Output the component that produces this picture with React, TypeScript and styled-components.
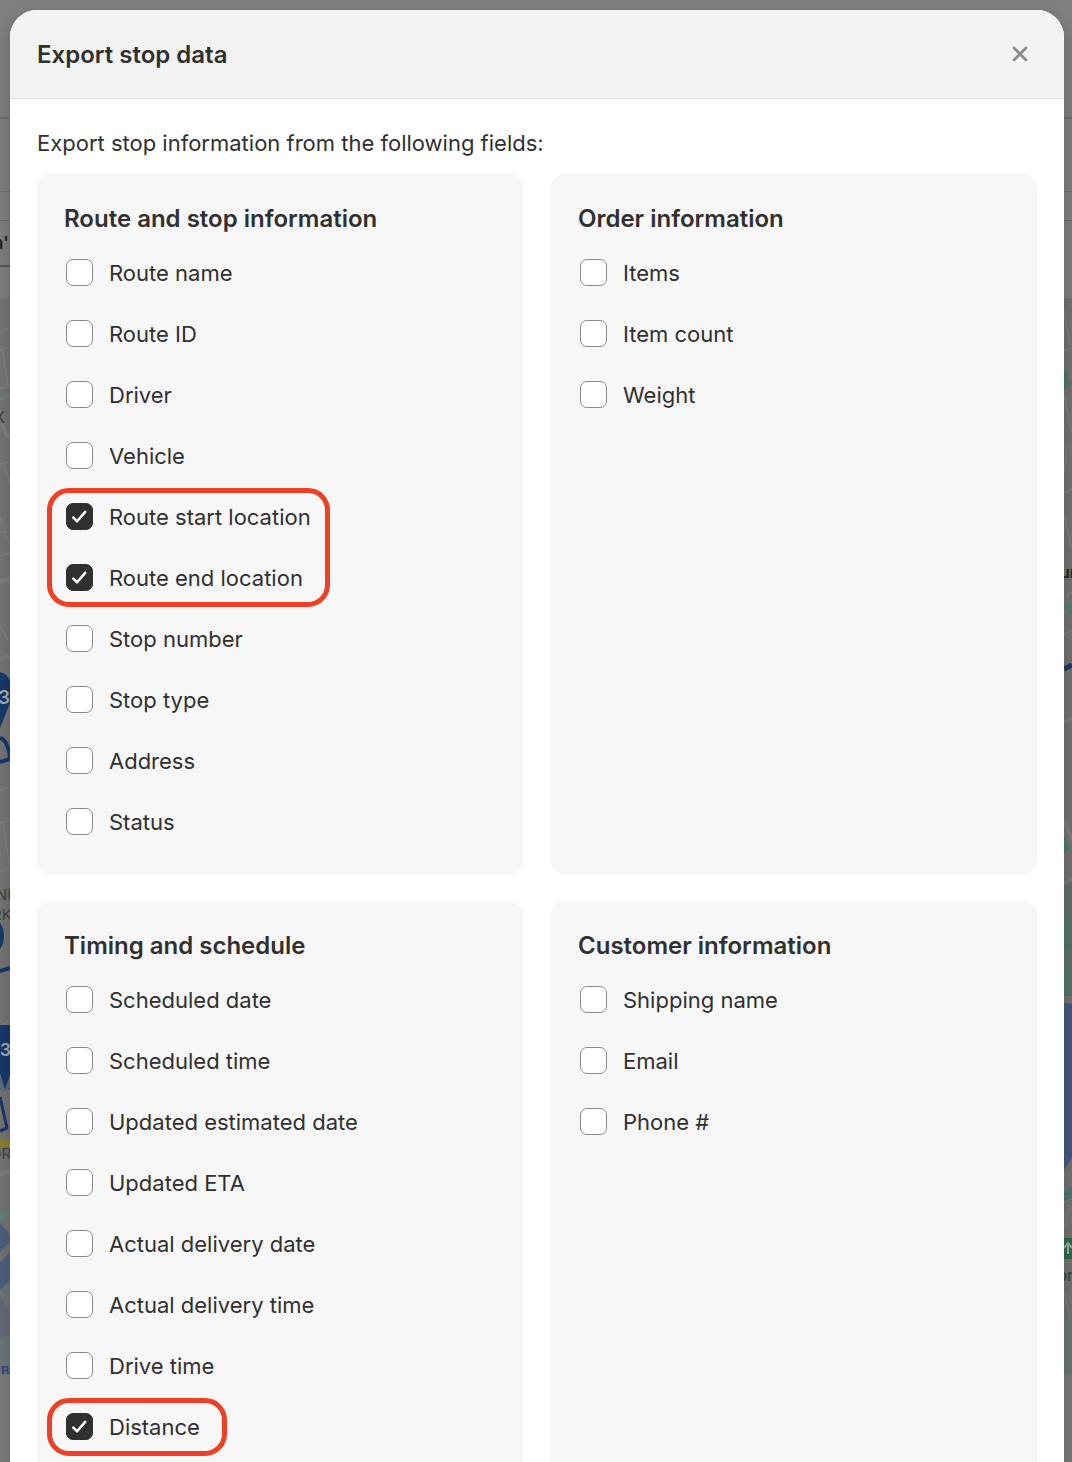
import React, { useState } from "react";
import styled, { createGlobalStyle } from "styled-components";

const GlobalStyle = createGlobalStyle`
  *, *::before, *::after { box-sizing: border-box; }
  body {
    margin: 0;
    background: #7f7f7f;
    color: #303030;
    font-family: Inter, "Liberation Sans", sans-serif;
    font-size: 22px;
    font-weight: 400;
    line-height: 32px;
    font-optical-sizing: none;
    -webkit-font-smoothing: antialiased;
  }
`;

const Screen = styled.div`
  position: relative;
  height: 100vh;
  overflow: hidden;
`;

const Backdrop = styled.div`
  position: absolute;
  inset: 0;
  display: flex;
  justify-content: space-between;
  background: #7f7f7f;
`;

const MapStrip = styled.svg`
  display: block;
  flex: none;
  overflow: hidden;
`;

const Scroller = styled.div`
  position: relative;
  height: 100%;
  padding: 10px 8px 0 10px;
  overflow-y: auto;
  scrollbar-width: none;
`;

const Dialog = styled.div`
  background: #fff;
  border-radius: 27px 27px 0 0;
  box-shadow: 0 8px 20px rgba(0, 0, 0, 0.2);
`;

const Header = styled.header`
  display: flex;
  align-items: center;
  justify-content: space-between;
  height: 89px;
  padding: 0 27px;
  background: #f3f3f3;
  border-bottom: 1px solid #e0e0e0;
  border-radius: 27px 27px 0 0;
`;

const Title = styled.h2`
  margin: 0;
  padding-top: 2px;
  font-size: 24px;
  font-weight: 600;
  line-height: 34px;
`;

const CloseButton = styled.button`
  display: grid;
  place-items: center;
  width: 34px;
  height: 34px;
  padding: 0;
  border: 0;
  background: none;
  color: #8a8a8a;
  cursor: pointer;
`;

const Body = styled.div`
  padding: 28px 27px 0;
`;

const Intro = styled.p`
  margin: 0 0 15px;
`;

const Panels = styled.div`
  display: grid;
  grid-template-columns: 1fr 1fr;
  gap: 27px 28px;
`;

const Panel = styled.section`
  padding: 28px 27px 22px;
  background: #f7f7f7;
  border-radius: 14px;
`;

const PanelTitle = styled.h3`
  margin: 0 0 6px;
  font-size: 24px;
  font-weight: 600;
  line-height: 34px;
`;

const FieldRow = styled.label`
  display: flex;
  align-items: center;
  gap: 16px;
  height: 61px;
  padding-left: 2px;
  cursor: pointer;
`;

const CheckSlot = styled.span`
  display: grid;
  flex: none;
  width: 27px;
  height: 27px;

  > * {
    grid-area: 1 / 1;
  }
`;

const Checkbox = styled.input`
  appearance: none;
  width: 27px;
  height: 27px;
  margin: 0;
  background: #fff;
  border: 1px solid #8a8a8a;
  border-radius: 7px;
  cursor: pointer;

  &:checked {
    background: #303030;
    border-color: #303030;
  }
`;

const CheckMark = styled.svg`
  pointer-events: none;
`;

const MarkedGroup = styled.div`
  position: relative;
`;

const Marker = styled.div<{ $width: number }>`
  position: absolute;
  top: 2px;
  bottom: 1px;
  left: -17px;
  width: ${(p) => p.$width}px;
  border: 5px solid #ed4025;
  border-radius: 22px;
  pointer-events: none;
`;

type Run = { fields: string[]; markerWidth?: number };
type Group = { title: string; runs: Run[] };

const groups: Group[] = [
  {
    title: "Route and stop information",
    runs: [
      { fields: ["Route name", "Route ID", "Driver", "Vehicle"] },
      { fields: ["Route start location", "Route end location"], markerWidth: 283 },
      { fields: ["Stop number", "Stop type", "Address", "Status"] },
    ],
  },
  { title: "Order information", runs: [{ fields: ["Items", "Item count", "Weight"] }] },
  {
    title: "Timing and schedule",
    runs: [
      {
        fields: [
          "Scheduled date",
          "Scheduled time",
          "Updated estimated date",
          "Updated ETA",
          "Actual delivery date",
          "Actual delivery time",
          "Drive time",
        ],
      },
      { fields: ["Distance"], markerWidth: 180 },
    ],
  },
  { title: "Customer information", runs: [{ fields: ["Shipping name", "Email", "Phone #"] }] },
];

function Field({ name, initial }: { name: string; initial: boolean }) {
  const [checked, setChecked] = useState(initial);
  return (
    <FieldRow>
      <CheckSlot>
        <Checkbox type="checkbox" checked={checked} onChange={(e) => setChecked(e.target.checked)} />
        {checked && (
          <CheckMark width="27" height="27" viewBox="0 0 27 27" fill="none" aria-hidden="true">
            <path
              d="M7.3 14.6 11.1 18.3 19.2 8.9"
              stroke="#fff"
              strokeWidth="2.500"
              strokeLinecap="round"
              strokeLinejoin="round"
            />
          </CheckMark>
        )}
      </CheckSlot>
      {name}
    </FieldRow>
  );
}

function LeftMap() {
  return (
    <MapStrip width="10" height="1462" viewBox="0 0 10 1462" aria-hidden="true">
      <g stroke="#6d6d6d" strokeWidth="1">
        <path d="M0 118h10" strokeWidth="2" />
        <path d="M0 191.500h10M0 220.500h10" />
        <path d="M0 266h10" stroke="#555" strokeWidth="2" />
      </g>
      <text x="-7" y="249" fontSize="17" fontWeight="600" fill="#222">n'</text>
      <rect y="298" width="10" height="1076" fill="#757575" />
      <g stroke="#808080" strokeWidth="1.500" fill="none">
        <path d="M0 332l10-5M0 350l10-3M2 346l6 40M0 389l10-3M0 464l10-2M4 464l6 20M0 517l10 30M0 533l10-2M0 556l10-3M0 625l8 15M0 790l10-3M0 823l10-3M3 823l7 45M0 872l10-4M0 970l10-3M0 1025l10-4" />
        <path d="M0 582l10-4M0 410q3 25 10 28M0 659l10-3M0 1175l10-5" strokeWidth="4" />
      </g>
      <path d="M0 400l10-5" stroke="#628a85" strokeWidth="2" />
      <text x="-6" y="423" fontSize="16" fill="#383838">X</text>
      <path d="M0 672q7 2 10 9v22L0 728z" fill="#18396b" />
      <text x="-2" y="704" fontSize="19" fontWeight="600" fill="#a5adb8">3</text>
      <path d="M0 738q8 2 10 20M0 762l10-3M0 971l10-3" stroke="#18396b" strokeWidth="4" fill="none" />
      <text x="-4" y="900" fontSize="15" fill="#404040">ND</text>
      <text x="-8" y="920" fontSize="15" fill="#404040">RK</text>
      <ellipse cx="-4" cy="936" rx="8" ry="15" fill="#18396b" />
      <rect y="1025" width="10" height="64" fill="#18396b" />
      <path d="M0 1073l5 16 5-14v12q-6 8-10 1z" fill="#5c6c80" />
      <text x="0" y="1056" fontSize="17" fontWeight="600" fill="#a5adb8">3</text>
      <path d="M0 1097l7 31-7 3" stroke="#18396b" strokeWidth="3" fill="none" />
      <rect y="1140" width="10" height="7" fill="#8a8030" />
      <text x="-10" y="1159" fontSize="15" fill="#404040">OR</text>
      <path d="M0 1214l7-5v7l-7 7z" fill="#5f827c" />
      <path d="M0 1223l10 12v7l-10 10z" fill="#4e6082" />
      <path d="M0 1262l10-10v110H0z" fill="#4e6082" />
      <path d="M0 1290l10-10v94H0z" fill="#6c7779" />
      <path d="M0 1295l10 18v22l-10 4z" fill="#666979" />
      <text x="1" y="1376" fontSize="13" fontWeight="700" fill="#34477f">B</text>
      <rect y="1374" width="10" height="88" fill="#7c7c7c" />
    </MapStrip>
  );
}

function RightMap() {
  return (
    <MapStrip width="8" height="1462" viewBox="0 0 8 1462" aria-hidden="true">
      <path d="M0 118h8" stroke="#6d6d6d" strokeWidth="2" />
      <path d="M0 191.500h8M0 220.500h8" stroke="#6d6d6d" />
      <rect y="298" width="8" height="1076" fill="#727270" />
      <g stroke="#7d7d7b" strokeWidth="1.500" fill="none">
        <path d="M0 310l6 35M0 350l8-2M0 395l8 38M0 448l8-2M3 450l-3 22M0 493l8-3M0 515l8 35M0 596l8-3M5 594l-5 20M0 634l8-3" />
        <path d="M0 722l8-3M0 820l8 20M0 885l8-6" strokeWidth="4" />
      </g>
      <path d="M0 366l7 19-7 5z" fill="#4f7870" />
      <text x="-4" y="578" fontSize="16" fontWeight="600" fill="#222">ur</text>
      <path d="M0 603l8-2v14l-7-2z" fill="#5c7a70" />
      <path d="M0 669l8-4" stroke="#18396b" strokeWidth="5" />
      <path d="M0 836l6 12-6 5z" fill="#4f7870" />
      <path d="M0 885l8-4v115H0z" fill="#5f716a" />
      <path d="M0 920h8v31H0zM0 968h8v28H0z" fill="#537269" />
      <path d="M0 1003l8 1v154l-8 12z" fill="#46597c" />
      <path d="M0 1192l8-5v14H0z" fill="#52736e" />
      <path d="M0 1202l8-3M0 1228l6-20M0 1290l8 40" stroke="#7b827d" />
      <rect y="1238" width="8" height="21" fill="#2e6750" />
      <path d="M0 1248l4-5 4 5M4 1245v9" stroke="#a0aca5" strokeWidth="2" fill="none" />
      <text x="-6" y="1281" fontSize="15" fontWeight="500" fill="#254a46">or</text>
      <path d="M0 1305l8 20v49H0z" fill="#667773" />
      <rect y="1374" width="8" height="88" fill="#797979" />
    </MapStrip>
  );
}

export default function App() {
  return (
    <Screen>
      <GlobalStyle />
      <Backdrop>
        <LeftMap />
        <RightMap />
      </Backdrop>
      <Scroller>
        <Dialog role="dialog" aria-modal="true" aria-labelledby="export-title">
          <Header>
            <Title id="export-title">Export stop data</Title>
            <CloseButton type="button" aria-label="Close">
              <svg width="16" height="16" viewBox="0 0 16 16" fill="none" aria-hidden="true">
                <path d="M2 2l12 12M14 2L2 14" stroke="currentColor" strokeWidth="2.700" strokeLinecap="round" />
              </svg>
            </CloseButton>
          </Header>
          <Body>
            <Intro>Export stop information from the following fields:</Intro>
            <Panels>
              {groups.map((group) => (
                <Panel key={group.title}>
                  <PanelTitle>{group.title}</PanelTitle>
                  {group.runs.map((run) => (
                    <MarkedGroup key={run.fields[0]}>
                      {run.fields.map((name) => (
                        <Field key={name} name={name} initial={run.markerWidth !== undefined} />
                      ))}
                      {run.markerWidth && <Marker $width={run.markerWidth} />}
                    </MarkedGroup>
                  ))}
                </Panel>
              ))}
            </Panels>
          </Body>
        </Dialog>
      </Scroller>
    </Screen>
  );
}
